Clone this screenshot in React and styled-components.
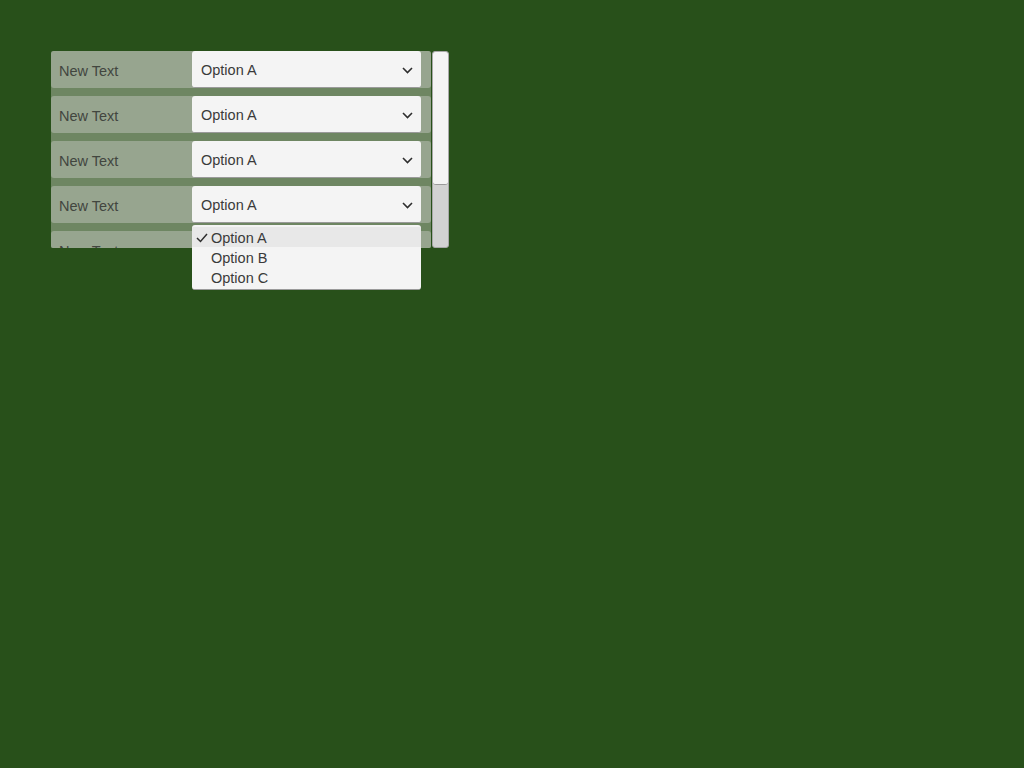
import styled, { createGlobalStyle } from 'styled-components';

const GlobalStyle = createGlobalStyle`
  html, body {
    margin: 0;
    padding: 0;
    background: #28501a;
    font-family: 'Liberation Sans', Arial, sans-serif;
  }
`;

const rows = [0, 1, 2, 3, 4];
const options = ['Option A', 'Option B', 'Option C'];

const Chevron = () => (
  <svg width="11" height="7" viewBox="0 0 11 7">
    <polyline points="1,1 5.5,5.5 10,1" fill="none" stroke="#2e2e2e" strokeWidth="1.6" />
  </svg>
);

const Check = () => (
  <svg width="12" height="10" viewBox="0 0 12 10">
    <polyline points="1,5 4.5,8.5 11,1" fill="none" stroke="#2e2e2e" strokeWidth="1.5" />
  </svg>
);

const App = () => {
  return (
    <Page>
      <GlobalStyle />
      <Panel>
        <Viewport>
          {rows.map((i) => (
            <Row key={i}>
              <Label>New Text</Label>
              <Select>
                <span>Option A</span>
                <Chevron />
              </Select>
            </Row>
          ))}
        </Viewport>
        <Scrollbar>
          <Thumb />
        </Scrollbar>
        <Popup>
          {options.map((o, i) => (
            <Item key={o} $active={i === 0}>
              <CheckSlot>{i === 0 && <Check />}</CheckSlot>
              {o}
            </Item>
          ))}
        </Popup>
      </Panel>
    </Page>
  );
};

const Page = styled.div`
  width: 1024px;
  height: 768px;
  padding: 51px 0 0 51px;
  box-sizing: border-box;
  background: #28501a;
`;

const Panel = styled.div`
  position: relative;
  display: flex;
  gap: 1px;
  width: 398px;
`;

const Viewport = styled.div`
  width: 380px;
  height: 197px;
  overflow: hidden;
  background: #6e8662;
  display: flex;
  flex-direction: column;
  gap: 8px;
  border-radius: 2px;
`;

const Row = styled.div`
  flex: 0 0 37px;
  display: flex;
  background: #97a58f;
  border-radius: 3px;
`;

const Label = styled.div`
  width: 141px;
  padding: 2px 0 0 8px;
  box-sizing: border-box;
  display: flex;
  align-items: center;
  font-size: 14.5px;
  color: #42463f;
`;

const Select = styled.div`
  width: 229px;
  height: 37px;
  box-sizing: border-box;
  background: #f4f4f4;
  border-radius: 3px;
  border-bottom: 1px solid #9a9a9a;
  display: flex;
  align-items: center;
  justify-content: space-between;
  padding: 2px 8px 0 9px;
  font-size: 14.5px;
  color: #3a3a3a;
`;

const Scrollbar = styled.div`
  width: 17px;
  height: 197px;
  background: #d2d2d2;
  border-radius: 3px;
  border: 1px solid #a8a8a8;
  box-sizing: border-box;
  overflow: hidden;
`;

const Thumb = styled.div`
  height: 133px;
  background: #f4f4f4;
  border-radius: 3px;
  border-bottom: 1px solid #9a9a9a;
  box-sizing: border-box;
`;

const Popup = styled.div`
  position: absolute;
  left: 141px;
  top: 174px;
  width: 229px;
  height: 65px;
  box-sizing: border-box;
  padding-top: 2px;
  background: #f4f4f4;
  border-radius: 3px;
  border-bottom: 1px solid #9a9a9a;
`;

const Item = styled.div`
  height: 20px;
  padding-top: 1px;
  box-sizing: border-box;
  display: flex;
  align-items: center;
  font-size: 14.5px;
  color: #3a3a3a;
  background: ${(p) => (p.$active ? '#e8e8e8' : 'transparent')};
`;

const CheckSlot = styled.span`
  width: 19px;
  padding-left: 4px;
  box-sizing: border-box;
  display: flex;
  align-items: center;
`;

export default App;
